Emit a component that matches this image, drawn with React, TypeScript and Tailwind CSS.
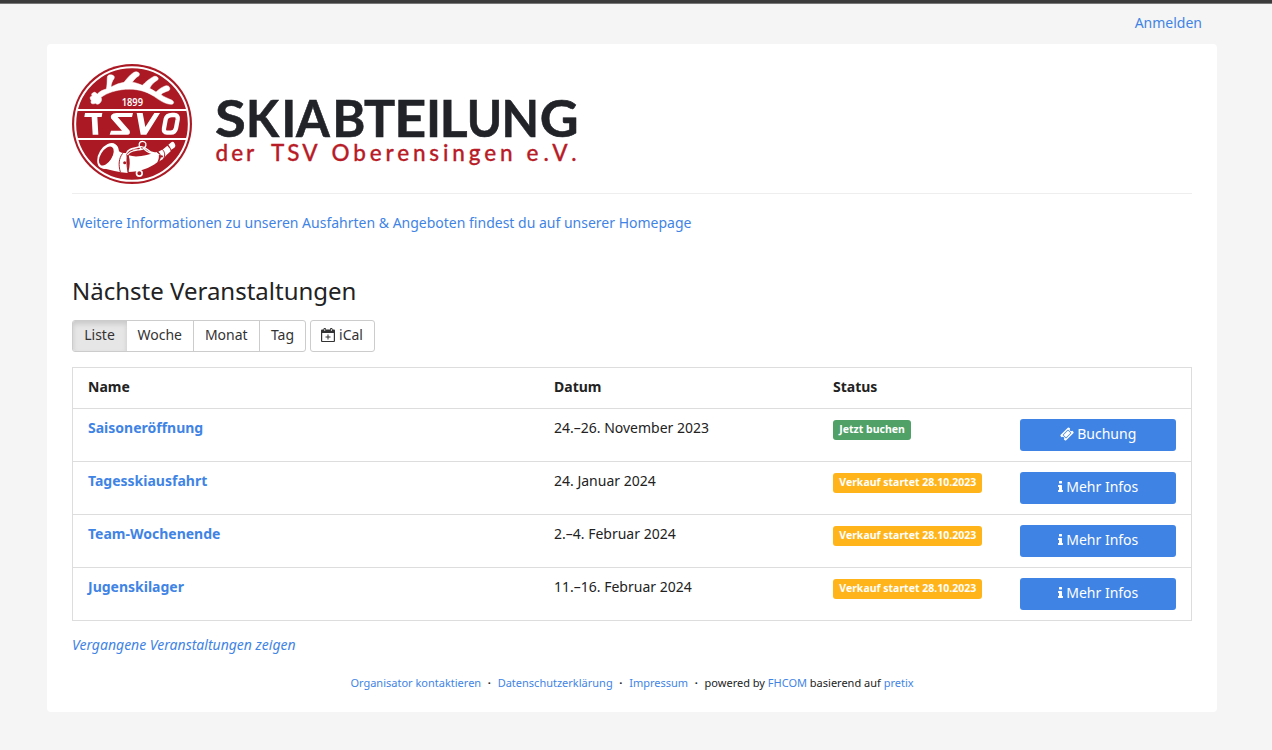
import React from "react";

function Icon({ d, viewBox, className }: { d: string; viewBox: string; className: string }) {
  return (
    <svg viewBox={viewBox} className={className} fill="currentColor" fillRule="evenodd" aria-hidden="true">
      <path d={d} />
    </svg>
  );
}

const TicketIcon = () => (
  <Icon
    viewBox="0 0 1792 1792"
    className="inline-block h-[14px] w-[14px] shrink-0"
    d="M1024 452l316 316-572 572-316-316zM813 1431l618-618q19-19 19-45t-19-45l-362-362q-18-18-45-18t-45 18l-618 618q-19 19-19 45t19 45l362 362q18 18 45 18t45-18zM1702 794l-907 908q-37 37-90.5 37t-90.5-37l-126-126q56-56 56-136t-56-136-136-56-136 56l-125-126q-37-37-37-90.5t37-90.5l907-906q37-37 90.5-37t90.5 37l125 125q-56 56-56 136t56 136 136 56 136-56l126 125q37 37 37 90.5t-37 90.5z"
  />
);

const InfoIcon = () => (
  <Icon
    viewBox="576 0 640 1792"
    className="inline-block h-[14px] w-[5px] shrink-0"
    d="M1216 1344v128q0 26-19 45t-45 19h-512q-26 0-45-19t-19-45v-128q0-26 19-45t45-19h64v-384h-64q-26 0-45-19t-19-45v-128q0-26 19-45t45-19h384q26 0 45 19t19 45v576h64q26 0 45 19t19 45zM1088 192v192q0 26-19 45t-45 19h-256q-26 0-45-19t-19-45v-192q0-26 19-45t45-19h256q26 0 45 19t19 45z"
  />
);

const CalendarIcon = () => (
  <Icon
    viewBox="0 0 14 14"
    className="inline-block h-[14px] w-[14px] shrink-0"
    d="M1 1.5H2.5V1Q2.5 0 3.5 0H4Q5 0 5 1V1.5H9V1Q9 0 10 0H10.500Q11.500 0 11.500 1V1.5H13Q14 1.5 14 2.5V13Q14 14 13 14H1Q0 14 0 13V2.500Q0 1.5 1 1.500ZM1.200 5V12.900H12.800V5ZM3.400 1V3H4.200V1ZM9.900 1V3H10.700V1ZM6.500 6.500H7.500V8.500H9.500V9.500H7.500V11.500H6.500V9.500H4.500V8.500H6.500Z"
  />
);

function ClubLogo() {
  return (
    <svg width="120" height="120" viewBox="18 18 360 360" className="block shrink-0" role="img" aria-label="TSVO">
      <circle cx="198" cy="198" r="180" fill="#ab1a24" />
      <circle cx="198" cy="198" r="170.5" fill="none" stroke="#fff" strokeWidth="6" />
      <path d="M34 156H362M34 243H362" stroke="#fff" strokeWidth="6" />
      <g fill="#fff">
        <path
          stroke="#fff"
          strokeWidth="1.5"
          d="M82 104C84 100 89 104 94 108C101 100 110 96 121 93C125 76 122 61 125 54C130 47 150 51 144 62C139 68 135 79 135 87C150 79 162 75 174 73C182 63 191 51 202 44C210 38 225 44 219 53C209 59 203 66 199 73C211 74 219 78 229 82C238 72 251 62 262 56C270 52 281 59 275 66C264 72 256 80 251 91C258 95 264 98 270 102C277 95 290 85 301 83C311 82 315 94 308 98C299 102 290 103 285 110C293 116 305 121 317 126C326 131 324 139 315 139C298 138 282 128 264 115C238 98 211 92 178 94C150 96 125 104 105 118C109 126 105 134 99 137C94 140 90 138 88 136C79 140 72 136 76 128C71 121 71 115 79 114C75 110 77 105 82 104Z"
        />
        <path d="M57 165H109L107 177H94L97 230H80L77 177H55Z" />
        <path d="M151 165H201L198 177H155L191 218Q194 230 184 230H131L135 218H168L135 181Q131 167 151 165Z" />
        <path d="M212 165H230L238 207L265 165H282L241 230H224Z" />
      </g>
      <path d="M318 171H325Q337 171 335 184L330 211Q327 224 315 224H303Q292 224 294 211L299 184Q302 171 318 171Z" fill="none" stroke="#fff" strokeWidth="13" />
      <text x="167" y="143" fill="#fff" className="font-['Noto_Sans'] text-[30px] font-semibold" textLength="64" lengthAdjust="spacingAndGlyphs">1899</text>
      <g>
        <ellipse cx="126" cy="294" rx="28" ry="42" transform="rotate(32 126 294)" fill="#fff" />
        <ellipse cx="121" cy="294" rx="17" ry="32" transform="rotate(32 121 294)" fill="#ab1a24" />
        <path d="M148 260C156 282 165 286 181 285L185 345C158 344 132 336 109 330C136 314 151 283 148 260Z" fill="#fff" />
        <path d="M188 292C214 301 247 290 273 282C280 290 281 298 274 313C250 331 222 342 187 342C192 325 193 309 188 292Z" fill="#fff" />
        <path d="M277 281Q292 275 304 263Q313 271 314 280Q302 290 290 304L276 312C289 298 286 289 277 281Z" fill="#fff" />
        <path d="M307 260L316 253Q321 249 325 255Q331 264 325 269L316 275Q313 267 307 260Z" fill="#fff" />
        <path d="M170 286C158 301 157 321 163 342M187 289C181 305 182 325 187 344M274 282C283 291 284 301 277 313M289 274C297 283 298 291 293 302" fill="none" stroke="#ab1a24" strokeWidth="3" />
        <circle cx="176" cy="314" r="4.5" fill="#ab1a24" />
        <circle cx="287" cy="295" r="3.5" fill="#ab1a24" />
        <path d="M181 287C186 271 203 272 218 267C231 263 240 270 246 276C257 287 270 283 280 291M184 291C195 273 211 280 225 273C216 264 218 250 230 250C240 250 243 260 236 269C228 281 211 272 202 277M233 271C243 284 255 285 266 289" fill="none" stroke="#fff" strokeWidth="4" />
        <circle cx="220" cy="346" r="8.5" fill="#ab1a24" stroke="#fff" strokeWidth="5" />
      </g>
    </svg>
  );
}

const letters = [
  ["S", "translate(214.9 137) scale(1.06 0.985)"],
  ["K", "translate(245.9 137) scale(0.91 0.985)"],
  ["I", "translate(281.2 137) scale(0.96 0.985)"],
  ["A", "translate(296 137) scale(0.92 0.985)"],
  ["B", "translate(332.2 137) scale(0.95 0.985)"],
  ["T", "translate(364 137) scale(0.98 0.985)"],
  ["E", "translate(394.3 137) scale(1.05 0.985)"],
  ["I", "translate(425.9 137) scale(0.96 0.985)"],
  ["L", "translate(439.5 137) scale(1.02 0.985)"],
  ["U", "translate(466.7 137) scale(0.9 0.985)"],
  ["N", "translate(501.6 137) scale(0.92 0.985)"],
  ["G", "translate(539.800 137) scale(1.01 0.985)"],
];

function Wordmark() {
  return (
    <svg width="380" height="120" viewBox="210 64 380 120" className="ml-[18px] block shrink-0">
      <g fill="#212329" stroke="#212329" strokeWidth="0.6" className="font-['Lato'] text-[53px] font-bold">
        {letters.map(([c, t], i) => (
          <text key={i} transform={t}>{c}</text>
        ))}
      </g>
      <g fill="#b81c27" stroke="#b81c27" strokeWidth="0.3" className="font-['Lato'] text-[22.5px] font-medium tracking-[3px]">
        <text x="215.5" y="161">der</text>
        <text x="271" y="161">TSV</text>
        <text x="331.5" y="161" textLength="184">Oberensingen</text>
        <text x="526.5" y="161" textLength="53">e.V.</text>
      </g>
    </svg>
  );
}

const link = "text-[#3f84e5] hover:underline";

const events = [
  { name: "Saisoneröffnung", date: "24.–26. November 2023", status: "Jetzt buchen", open: true },
  { name: "Tagesskiausfahrt", date: "24. Januar 2024", status: "Verkauf startet 28.10.2023", open: false },
  { name: "Team-Wochenende", date: "2.–4. Februar 2024", status: "Verkauf startet 28.10.2023", open: false },
  { name: "Jugenskilager", date: "11.–16. Februar 2024", status: "Verkauf startet 28.10.2023", open: false },
];

const views = ["Woche", "Monat"];

const Dot = () => <span className="inline-block w-[16.5px] text-center font-bold">·</span>;

export default function App() {
  return (
    <div className="min-h-[750px] bg-[#f5f5f5] font-['Noto_Sans',sans-serif] text-[14px] leading-[20px] text-[#222]">
      <div className="h-1 border-b border-[#777] bg-[#3b3b3b]" />
      <div className="ml-[47px] w-[1170px]">
        <nav className="flex h-10 justify-end pt-[9px] pr-[15px]">
          <a href="#" className={link}>Anmelden</a>
        </nav>
        <div className="h-[668px] rounded-[4px] bg-white px-[25px] pt-5">
          <header className="flex h-[130px] items-start border-b border-[#eee]">
            <ClubLogo />
            <Wordmark />
          </header>
          <p className="mt-[19px]">
            <a href="#" className={link}>Weitere Informationen zu unseren Ausfahrten &amp; Angeboten findest du auf unserer Homepage</a>
          </p>
          <h3 className="mt-[45px] text-[24px] leading-[26px]">Nächste Veranstaltungen</h3>
          <div className="mt-4 flex gap-1 leading-[20px] text-[#333]">
            <div className="flex h-8 rounded-[3px] border border-[#ccc]">
              <button className="w-[54px] rounded-l-[2px] bg-[#e6e6e6] pr-px pb-0.5 shadow-[inset_0_3px_5px_rgba(0,0,0,0.125)]">Liste</button>
              {views.map((v) => (
                <button key={v} className="w-[66.5px] border-r border-[#ccc] pb-0.5">{v}</button>
              ))}
              <button className="w-[45px] pb-0.5">Tag</button>
            </div>
            <button className="flex h-8 w-[65px] items-center justify-center gap-1 rounded-[3px] border border-[#ccc] pr-px pb-0.5">
              <CalendarIcon />
              iCal
            </button>
          </div>
          <div className="mt-[15px] border border-[#ddd]">
            <div className="grid h-10 grid-cols-[466px_279px_187px_186px] pt-[9px] font-bold">
              <div className="px-[15px]">Name</div>
              <div className="px-[15px]">Datum</div>
              <div className="px-[15px]">Status</div>
            </div>
            {events.map((e) => (
              <div key={e.name} className="grid h-[53px] grid-cols-[466px_279px_187px_186px] border-t border-[#ddd] pt-[10px]">
                <div className="-mt-px px-[15px] font-bold">
                  <a href="#" className={link}>{e.name}</a>
                </div>
                <div className="-mt-px px-[15px]">{e.date}</div>
                <div className="flex items-start px-[15px] pt-px">
                  <span
                    className={
                      e.open
                        ? "h-5 rounded-[3px] bg-[#50a167] px-[6.3px] text-[10.5px] leading-[19px] font-bold whitespace-nowrap text-white"
                        : "h-5 rounded-[3px] bg-[#ffb419] px-[6.3px] text-[10.5px] leading-[19px] font-bold whitespace-nowrap text-white"
                    }
                  >
                    {e.status}
                  </span>
                </div>
                <div className="px-[15px]">
                  <button className="flex h-8 w-full items-center justify-center gap-[3.5px] rounded-[3px] bg-[#3f84e5] pb-0.5 text-white">
                    {e.open ? <TicketIcon /> : <InfoIcon />}
                    {e.open ? "Buchung" : "Mehr Infos"}
                  </button>
                </div>
              </div>
            ))}
          </div>
          <p className="mt-[14px] italic">
            <a href="#" className={link}>Vergangene Veranstaltungen zeigen</a>
          </p>
          <footer className="mt-[18px] text-center text-[11px] whitespace-pre">
            <a href="#" className={link}>Organisator kontaktieren</a>
            <Dot />
            <a href="#" className={link}>Datenschutzerklärung</a>
            <Dot />
            <a href="#" className={link}>Impressum</a>
            <Dot />
            {"powered by "}
            <a href="#" className={link}>FHCOM</a>
            {" basierend auf "}
            <a href="#" className={link}>pretix</a>
          </footer>
        </div>
      </div>
    </div>
  );
}
